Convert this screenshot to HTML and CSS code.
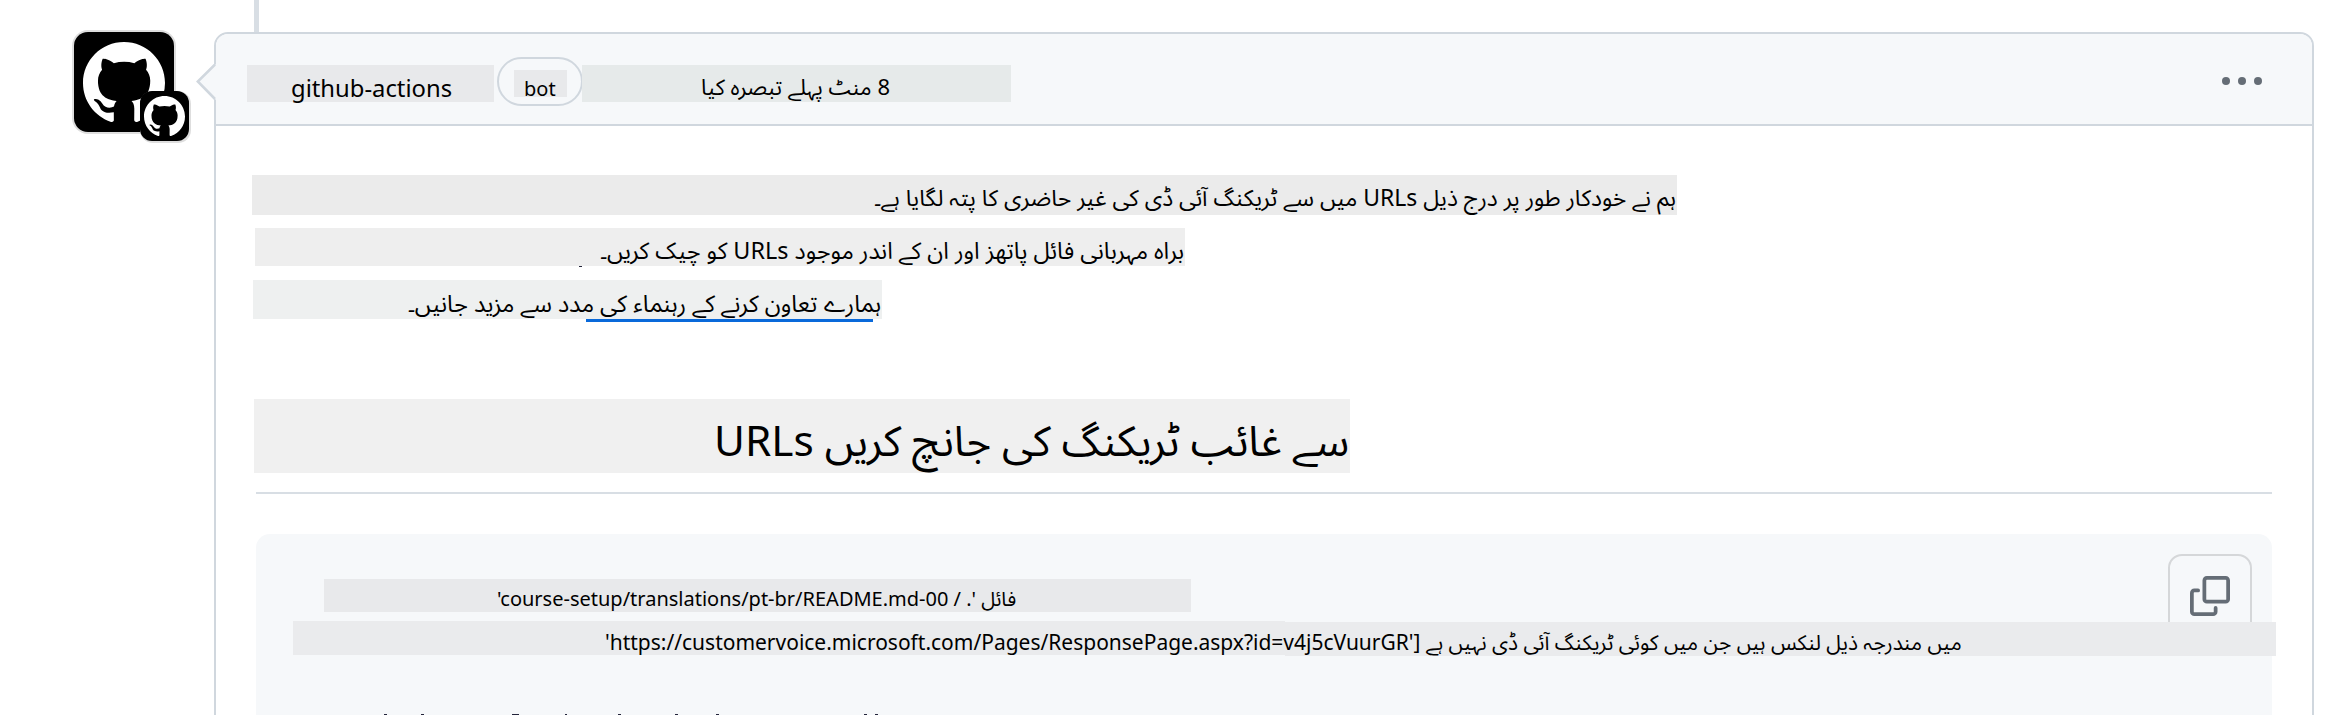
FILE: index.html
```
<!DOCTYPE html>
<html lang="ur">
<head>
<meta charset="utf-8">
<title>github-actions</title>
<link rel="stylesheet" href="styles.css">
</head>
<body>
<svg class="defs" width="0" height="0">
  <symbol id="mark" viewBox="0 0 16 16"><path d="M8 0C3.58 0 0 3.58 0 8c0 3.54 2.29 6.53 5.47 7.59.4.07.55-.17.55-.38 0-.19-.01-.82-.01-1.49-2.01.37-2.53-.49-2.69-.94-.09-.23-.48-.94-.82-1.13-.28-.15-.68-.52-.01-.53.63-.01 1.08.58 1.23.82.72 1.21 1.87.87 2.33.66.07-.52.28-.87.51-1.07-1.78-.2-3.64-.89-3.64-3.95 0-.87.31-1.59.82-2.15-.08-.2-.36-1.02.08-2.12 0 0 .67-.21 2.2.82.64-.18 1.32-.27 2-.27.68 0 1.36.09 2 .27 1.53-1.04 2.2-.82 2.2-.82.44 1.1.16 1.92.08 2.12.51.56.82 1.27.82 2.15 0 3.07-1.87 3.75-3.65 3.95.29.25.54.73.54 1.48 0 1.07-.01 1.93-.01 2.2 0 .21.15.46.55.38A8.013 8.013 0 0016 8c0-4.42-3.58-8-8-8z"/></symbol>
</svg>
<div class="page">
  <div class="avatar">
    <svg class="avatar-mark"><use href="#mark"/></svg>
    <div class="avatar-badge"><svg class="badge-mark"><use href="#mark"/></svg></div>
  </div>
  <div class="timeline"></div>
  <article class="comment">
    <svg class="caret" viewBox="0 0 20 36"><path class="caret-fill" d="M20 0 2 18 20 36z"/><path class="caret-line" d="M19 .5 1.8 17.5 19 35"/></svg>
    <header class="head">
      <div class="band author" dir="ltr"><span class="txt">github-actions</span></div>
      <div class="pill"><div class="band bot" dir="ltr"><span class="txt">bot</span></div></div>
      <div class="band time" dir="rtl"><span class="txt">8 منٹ پہلے تبصرہ کیا</span></div>
      <svg class="kebab" viewBox="0 0 40 8"><circle cx="4" cy="4" r="4"/><circle cx="20" cy="4" r="4"/><circle cx="36" cy="4" r="4"/></svg>
    </header>
    <div class="body">
      <div class="band line1" dir="rtl"><span class="txt">ہم نے خودکار طور پر درج ذیل URLs میں سے ٹریکنگ آئی ڈی کی غیر حاضری کا پتہ لگایا ہے۔</span></div>
      <div class="band line2" dir="rtl"><span class="txt">براہ مہربانی فائل پاتھز اور ان کے اندر موجود URLs کو چیک کریں۔</span><i class="speck"></i></div>
      <div class="band line3" dir="rtl"><span class="txt">ہمارے تعاون کرنے کے رہنماء کی مدد سے مزید جانیں۔</span><i class="underline"></i></div>
      <h2 class="title"><span class="band heading" dir="ltr"><span class="txt">URLs سے غائب ٹریکنگ کی جانچ کریں</span></span></h2>
      <div class="code">
        <div class="copy"><svg class="copy-icon" viewBox="0 0 16 16"><path d="M0 6.75C0 5.784.784 5 1.75 5h1.5a.75.75 0 0 1 0 1.5h-1.5a.25.25 0 0 0-.25.25v7.5c0 .138.112.25.25.25h7.5a.25.25 0 0 0 .25-.25v-1.5a.75.75 0 0 1 1.5 0v1.5A1.75 1.75 0 0 1 9.25 16h-7.5A1.75 1.75 0 0 1 0 14.25Z"/><path d="M5 1.75C5 .784 5.784 0 6.75 0h7.5C15.216 0 16 .784 16 1.75v7.5A1.75 1.75 0 0 1 14.25 11h-7.5A1.75 1.75 0 0 1 5 9.25Zm1.75-.25a.25.25 0 0 0-.25.25v7.5c0 .138.112.25.25.25h7.5a.25.25 0 0 0 .25-.25v-7.5a.25.25 0 0 0-.25-.25Z"/></svg></div>
        <div class="band code1" dir="ltr"><span class="txt">'course-setup/translations/pt-br/README.md-00 / .' فائل</span></div>
        <div class="band code2" dir="ltr"><span class="txt">'https://customervoice.microsoft.com/Pages/ResponsePage.aspx?id=v4j5cVuurGR'] میں مندرجہ ذیل لنکس ہیں جن میں کوئی ٹریکنگ آئی ڈی نہیں ہے</span></div>
        <!-- Tops of the next code line, cut by the viewport edge -->
        <svg class="cut-line" viewBox="0 0 500 1"><path d="M0 .5h3M37 .5h3M128 .5h7M181 .5h2M234 .5h3M291 .5h3M332 .5h3M480 .5h3M491 .5h3"/></svg>
      </div>
    </div>
  </article>
</div>
</body>
</html>
```
FILE: styles.css
```
* { box-sizing: border-box; }
html, body { margin: 0; height: 715px; overflow: hidden; background: #fff; }
body { font-family: "Noto Sans", "Noto Sans Arabic", "DejaVu Sans", sans-serif; color: #000; }
.defs { position: absolute; }
.page { position: relative; display: flex; width: 2326px; height: 715px; padding: 32px 12px 0 74px; overflow: hidden; }
.avatar { position: relative; width: 100px; height: 100px; border-radius: 14px; background: #000; box-shadow: 0 0 0 2px #dedede; padding: 10px 9px; flex: none; }
.avatar-mark { display: block; width: 82px; height: 82px; fill: #fff; }
.avatar-badge { position: absolute; left: 66px; top: 59px; width: 49px; height: 50px; border-radius: 12px; background: #000; box-shadow: 1px 1px 0 1px #dedede; padding: 5px 4px; }
.badge-mark { display: block; width: 41px; height: 41px; fill: #fff; }
.timeline { position: absolute; left: 254px; top: 0; width: 5px; height: 32px; background: #d8dee4; }
.comment { position: relative; flex: none; width: 2100px; height: 760px; margin-left: 40px; border: 2px solid #d0d7de; border-radius: 14px; background: #fff; }
.caret { position: absolute; left: -20px; top: 30px; width: 20px; height: 36px; }
.caret-fill { fill: #f6f8fa; }
.caret-line { fill: none; stroke: #d0d7de; stroke-width: 2.6; }
.head { display: flex; align-items: flex-start; height: 92px; padding: 23px 50px 0 31px; background: #f6f8fa; border-bottom: 2px solid #d0d7de; border-radius: 12px 12px 0 0; }
.band { display: flex; position: relative; white-space: nowrap; }
.txt { display: block; flex: none; }
.author { width: 247px; height: 37px; margin-top: 8px; padding-left: 44px; background: #e8e9eb; font-size: 23.8px; line-height: 47px; }
.pill { width: 86px; height: 49px; margin-left: 3px; padding: 11px 0 0 15px; border: 2px solid #d0d7de; border-radius: 25px; }
.bot { width: 53px; height: 27px; padding-left: 10px; background: #e8e9eb; font-size: 20px; line-height: 38px; }
.time { width: 429px; height: 37px; margin: 8px 0 0 -1px; padding-right: 121px; background: #e6eaea; font-size: 22px; line-height: 43px; }
.kebab { width: 40px; height: 8px; margin: 20px 0 0 auto; fill: #656d76; }
.body { padding: 49px 40px 0; }
.line1 { width: 1425px; height: 40px; margin-left: -4px; padding-right: 1px; background: #ebebeb; font-size: 22.95px; line-height: 45px; }
.line2 { width: 930px; height: 38px; margin: 13px 0 0 -1px; padding-right: 1px; background: #eee; font-size: 23.38px; line-height: 45px; }
.line3 { width: 629px; height: 39px; margin: 14px 0 0 -3px; padding-right: 1px; background: #eef0f0; font-size: 23.5px; line-height: 47px; }
.speck { position: absolute; left: 324px; top: 38px; width: 3px; height: 1px; background: #23243a; }
.underline { position: absolute; left: 333px; top: 39px; width: 287px; height: 3px; background: #0969da; }
.title { height: 95px; margin: 80px 0 0; border-bottom: 2px solid #d8dee4; font-weight: 400; }
.heading { width: 1096px; height: 74px; margin-left: -2px; padding-left: 460px; background: #f0f0f0; font-size: 42.3px; line-height: 81px; }
.code { position: relative; height: 240px; margin-top: 40px; padding-top: 45px; border-radius: 14px; background: #f6f8fa; }
.copy { position: absolute; right: 20px; top: 20px; width: 84px; height: 84px; padding: 20px; border: 2px solid #d5d7d9; border-radius: 14px; }
.copy-icon { display: block; width: 40px; height: 40px; fill: #656d76; }
.code1 { width: 867px; height: 33px; margin-left: 68px; padding-left: 173px; background: #e8e9eb; font-size: 20px; line-height: 40px; }
.code2 { width: 1983px; height: 35px; margin: 9px 0 0 37px; padding-left: 312px; background: linear-gradient(#eaebed, #eaebed) 0 0 / 992px 34px no-repeat, linear-gradient(#eaebed, #eaebed) 992px 1px / 991px 34px no-repeat; font-size: 20.99px; line-height: 42px; }
.cut-line { display: block; width: 500px; height: 1px; margin: 58px 0 0 128px; stroke: #23243a; stroke-width: 1; }
```
